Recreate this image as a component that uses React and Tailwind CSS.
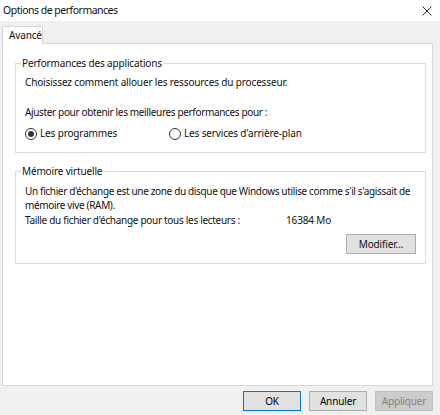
import React, { useState } from "react";

const font = { fontFamily: '"Noto Sans", "Open Sans", sans-serif' };

const Radio = ({ checked, label, onClick, className = "" }) => (
  <button onClick={onClick} className={`flex items-center gap-[3px] ${className}`}>
    <span className="flex h-[12px] w-[12px] items-center justify-center rounded-full border border-[#333333] bg-white">
      {checked && <span className="h-[6px] w-[6px] rounded-full bg-[#333333]" />}
    </span>
    <span>{label}</span>
  </button>
);

const Button = ({ children, variant }) => {
  const styles = {
    default: "border-[#0078d7] bg-[#e1e1e1] text-black",
    normal: "border-[#adadad] bg-[#e1e1e1] text-black",
    disabled: "border-[#bfbfbf] bg-[#cccccc] text-[#838383]",
  };
  return (
    <button className={`h-[20px] w-[58px] border ${styles[variant]} leading-none`}>
      {children}
    </button>
  );
};

export default function App() {
  const [mode, setMode] = useState("programmes");

  return (
    <div style={font} className="flex h-[415px] w-[440px] flex-col bg-[#f0f0f0] text-[10px] leading-[15px] tracking-[-0.15px] text-[#111111]">
      {/* title bar */}
      <div className="flex h-[21px] items-center justify-between bg-white pl-[3px] pr-[8px]">
        <span className="text-[10.5px] tracking-[-0.5px]">Options de performances</span>
        <svg width="10" height="10" viewBox="0 0 10 10" className="text-[#333]">
          <path d="M0.5 0.5 L9.5 9.5 M9.5 0.5 L0.5 9.5" stroke="currentColor" strokeWidth="1" />
        </svg>
      </div>

      <div className="flex flex-1 flex-col pl-[2px] pr-[7px] pt-[5px]">
        {/* tab */}
        <div className="relative z-10 -mb-px flex h-[18px] w-[41px] items-center border border-b-0 border-[#d4d4d4] bg-white pl-[6px]">
          Avancé
        </div>

        {/* panel */}
        <div className="flex h-[343px] flex-col border border-[#d9d9d9] bg-white pl-[12px] pr-[6px]">
          <fieldset className="mt-[12px] border border-[#dcdcdc] px-[9px] pb-[11px]">
            <legend className="-ml-[4px] px-[1px]">Performances des applications</legend>
            <p className="mt-[4px]">Choisissez comment allouer les ressources du processeur.</p>
            <p className="mt-[15px] tracking-[-0.35px]">Ajuster pour obtenir les meilleures performances pour :</p>
            <div className="mt-[6px] flex">
              <Radio
                checked={mode === "programmes"}
                label="Les programmes"
                onClick={() => setMode("programmes")}
                className="w-[144px]"
              />
              <Radio
                checked={mode === "services"}
                label="Les services d'arrière-plan"
                onClick={() => setMode("services")}
              />
            </div>
          </fieldset>

          <fieldset className="mt-[11px] border border-[#dcdcdc] px-[9px] pb-[9px]">
            <legend className="-ml-[4px] px-[1px]">Mémoire virtuelle</legend>
            <p className="mt-[5px] whitespace-nowrap leading-[14px] tracking-[-0.35px]">
              Un fichier d'échange est une zone du disque que Windows utilise comme s'il s'agissait de
              <br />
              mémoire vive (RAM).
            </p>
            <div className="mt-[1px] flex">
              <span className="w-[261px] tracking-[-0.3px]">Taille du fichier d'échange pour tous les lecteurs :</span>
              <span>16384 Mo</span>
            </div>
            <div className="mt-[6px] flex justify-end">
              <button className="h-[20px] w-[70px] border border-[#adadad] bg-[#e1e1e1] leading-none">
                Modifier...
              </button>
            </div>
          </fieldset>
        </div>

        {/* footer */}
        <div className="flex justify-end gap-[8px] pt-[5px]">
          <Button variant="default">OK</Button>
          <Button variant="normal">Annuler</Button>
          <Button variant="disabled">Appliquer</Button>
        </div>
      </div>
    </div>
  );
}
